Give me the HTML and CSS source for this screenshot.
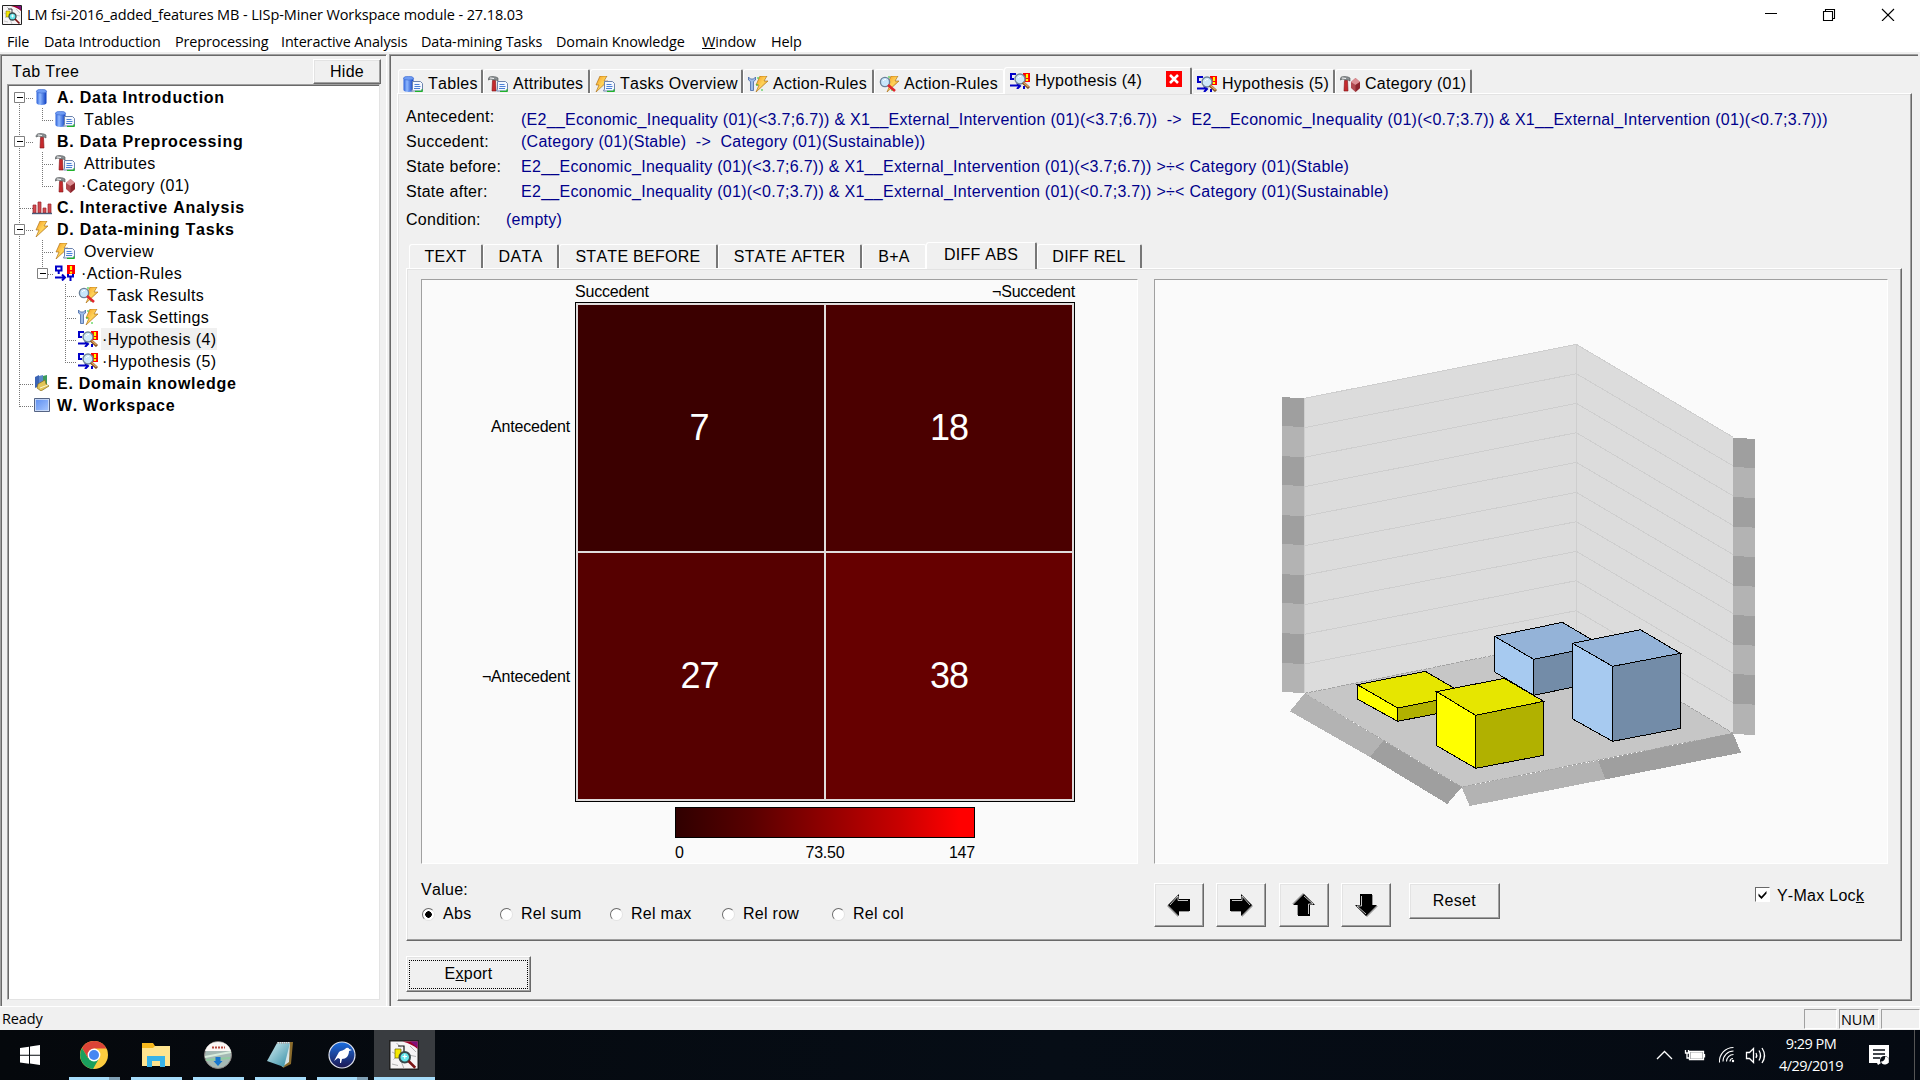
FILE: index.html
```html
<!DOCTYPE html>
<html lang="en">
<head>
<meta charset="utf-8">
<title>LISp-Miner Workspace</title>
<link rel="stylesheet" href="styles.css">
</head>
<body>
<svg class="defs" width="0" height="0">
  <defs>
    <linearGradient id="gBlue" x1="0" x2="1" y1="0" y2="0"><stop offset="0" stop-color="#2a5fd8"/><stop offset=".35" stop-color="#8fb8ff"/><stop offset="1" stop-color="#0a3cc0"/></linearGradient>
    <linearGradient id="gBolt" x1="0" x2="1" y1="0" y2="1"><stop offset="0" stop-color="#f59a1c"/><stop offset=".5" stop-color="#ffd35a"/><stop offset="1" stop-color="#c8740a"/></linearGradient>
    <linearGradient id="gScreen" x1="0" x2="1" y1="0" y2="1"><stop offset="0" stop-color="#5b8df0"/><stop offset="1" stop-color="#a9c8ff"/></linearGradient>
    <linearGradient id="gNote" x1="0" x2="1" y1="0" y2="1"><stop offset="0" stop-color="#d5eef2"/><stop offset="1" stop-color="#2f8ba3"/></linearGradient>
    <linearGradient id="gBird" x1="0" x2="0" y1="0" y2="1"><stop offset="0" stop-color="#1b6fe0"/><stop offset="1" stop-color="#1c1650"/></linearGradient>
    <g id="cyl"><path d="M.5 2v12c0 2.500 10 2.500 10 0V2z" fill="url(#gBlue)"/><ellipse cx="5.500" cy="2.200" rx="5" ry="1.900" fill="#6f9cf4" stroke="#3a68cf" stroke-width=".6"/></g>
    <g id="sheet"><path d="M9.500 5.500h8l2 2v7.500h-11l1-2z" fill="#f4f8ff" stroke="#6c83ad"/><path d="M11.500 8.500h5M11.500 10.500h6M11 12.500h6" stroke="#4b7fd6"/><path d="M12 15.300h7v-2" stroke="#20b32a" stroke-width="1.300" fill="none"/></g>
    <g id="hammer"><path d="M0 4C0 0 4 0 8 1l2 1v3L8 4H5L3 3z" fill="#8b9093" stroke="#4c5052" stroke-width=".6"/><path d="M2 2l4 .5" stroke="#f3f3f3"/><path d="M4.500 4.500h3L8 15H4z" fill="#c52a2d" stroke="#811014" stroke-width=".6"/></g>
    <g id="bolt"><path d="M5 0h7L9 5h4L1 16l3-7H1z" fill="url(#gBolt)" stroke="#a4660c" stroke-width=".6"/></g>
    <g id="lens"><circle cx="7" cy="6" r="4.600" fill="#c8e6fb" stroke="#6b8199" stroke-width="1.400"/><path d="M5 5q1-2 3-1.500" stroke="#fff" fill="none"/></g>
    <g id="rules"><path d="M1 1.500h5.500v4H1zM3.700 5v4M0 12.500h10M7 9.500l3 3-3 3M13 9v2.500h5V8M15.500 11v5" fill="none" stroke="#0000c8" stroke-width="2"/><path d="M12 0h8v9h-8z" fill="#f00"/><path d="M16 1v4M16 6.500v2" stroke="#ff0" stroke-width="2.200"/></g>
    <symbol id="i-db" viewBox="0 0 20 16"><use href="#cyl" x="4"/></symbol>
    <symbol id="i-tables" viewBox="0 0 20 16"><use href="#cyl"/><use href="#sheet"/></symbol>
    <symbol id="i-prep" viewBox="0 0 20 16"><use href="#hammer" x="4"/></symbol>
    <symbol id="i-attr" viewBox="0 0 20 16"><use href="#hammer"/><use href="#sheet"/></symbol>
    <symbol id="i-cat" viewBox="0 0 20 16"><use href="#hammer"/><path d="M15.500 2l4.500 4v6l-4.500 4-4.500-4V6z" fill="#b14a50"/><path d="M15.500 2l4.500 4-4.500 3-4.500-3z" fill="#dc9094"/><path d="M15.500 9v7l4.500-4V6z" fill="#8c262d"/></symbol>
    <symbol id="i-bars" viewBox="0 0 20 16"><path d="M1 6h3v8H1zM6 3h3v11H6zM11 9h3v5h-3zM16 5h3v9h-3z" fill="#d24a50" stroke="#9b2228" stroke-width=".7"/><path d="M0 14.500h20" stroke="#4a5a78" stroke-width="1.400"/></symbol>
    <symbol id="i-bolt" viewBox="0 0 20 16"><use href="#bolt" x="3"/></symbol>
    <symbol id="i-over" viewBox="0 0 20 16"><use href="#bolt"/><use href="#sheet"/></symbol>
    <symbol id="i-rules" viewBox="0 0 20 16"><use href="#rules"/></symbol>
    <symbol id="i-result" viewBox="0 0 20 16"><use href="#bolt" x="7"/><path d="M9 1h2M8 9h2M12 14h2" stroke="#28c828"/><use href="#lens" x="-1"/><path d="M9 9l7 6" stroke="#e0262c" stroke-width="2.600"/></symbol>
    <symbol id="i-set" viewBox="0 0 20 16"><path d="M.5 1v3l2 1.500V14.500h3V5.500l2-1.500V1L5.500 3h-3z" fill="#9dbbe8" stroke="#4467a5" stroke-width=".8"/><use href="#bolt" x="7"/><path d="M9 2h2M8 9h2M13 14h2" stroke="#28c828"/></symbol>
    <symbol id="i-hyp" viewBox="0 0 20 16"><path d="M6 1H1v5h3M0 12.500h9M7 10l3 3-3 3M14 13v3" fill="none" stroke="#0000c8" stroke-width="2"/><path d="M13 0h7v9h-7z" fill="#f00"/><path d="M17 1v4M17 6v2" stroke="#ff0" stroke-width="2.200"/><circle cx="10" cy="6" r="5" fill="#cfe9f8" stroke="#71869a" stroke-width="1.400"/><path d="M8 5q1-2 3-1.500" stroke="#fff" fill="none"/><path d="M13 9.500l6 5.500" stroke="#7d4b1f" stroke-width="3"/><path d="M13.500 9.500l5 4.500" stroke="#e3a55f" stroke-width="1.400"/></symbol>
    <symbol id="i-know" viewBox="0 0 20 16"><path d="M3 2l4-2v11l-4 2z" fill="#3c64b4"/><path d="M7 1l4-1v11H7z" fill="#5a86c8"/><path d="M11 1l4-1v9l-4 2z" fill="#3c9a5c"/><path d="M6 9l7-4 1 4 3 2-8 5-4-3z" fill="#e2c558" stroke="#8a6c18" stroke-width=".7"/><path d="M8 13l8-3" stroke="#fff6d0"/></symbol>
    <symbol id="i-work" viewBox="0 0 20 16"><path d="M3 2h14v12H3z" fill="url(#gScreen)" stroke="#dce6f8" stroke-width="1.500"/><path d="M2.500 1.500h15v13h-15z" fill="none" stroke="#556484"/></symbol>
    <symbol id="i-app" viewBox="0 0 20 20"><path d="M.5.5h19v19H.5z" fill="#f6f4f5" stroke="#222"/><path d="M2 8l4 2-3 3M8 14l2 5M2 16l4 1M14 4l4 4M13 10l5 1M5 2l3 3" stroke="#aaa" fill="none" stroke-width=".6"/><path d="M9 1h10v5q-3-3-10-5z" fill="#a00028"/><path d="M14 1h5v4z" fill="#80107c"/><path d="M4 6h4v6H4z" fill="#f5e800" stroke="#776d00" stroke-width=".5"/><path d="M6 4h4v5" fill="none" stroke="#111" stroke-width=".8"/><circle cx="10.500" cy="11.500" r="3.500" fill="#64e5ea" stroke="#37494b" stroke-width="1.300"/><path d="M13 14l4.500 4.500" stroke="#7a1414" stroke-width="1.700"/><path d="M9 11h3M10.500 9.500v3" stroke="#fff" stroke-width=".8"/></symbol>
    <symbol id="arrow" viewBox="0 0 24 24"><path d="M1 12L12 1v5h11v12H12v5z" fill="#999" transform="translate(-1 1)"/><path d="M1 12L12 1v5h11v12H12v5z"/><path d="M3 12l8-9v4.500h10" fill="none" stroke="#ddd" stroke-width=".9"/></symbol>
  </defs>
</svg>

<header class="titlebar">
  <svg class="app"><use href="#i-app"/></svg>
  <span class="title">LM fsi-2016_added_features MB - LISp-Miner Workspace module - 27.18.03</span>
  <svg class="winctl" viewBox="0 0 130 14"><path d="M0 6.500h12M58.500 4.500h9v9h-9zM60.500 4.500v-2h9v9h-2M117 2l12 12M129 2l-12 12" fill="none" stroke="#000" stroke-width="1.100"/></svg>
</header>
<nav class="menubar">
  <span style="width:23px">File</span><span style="width:117px">Data Introduction</span><span style="width:92px">Preprocessing</span><span style="width:126px">Interactive Analysis</span><span style="width:121px">Data-mining Tasks</span><span style="width:132px">Domain Knowledge</span><span style="width:55px"><u>W</u>indow</span><span>Help</span>
</nav>

<main class="workspace">
  <aside class="side">
    <div class="sidehead"><span>Tab Tree</span><button class="btn hide">Hide</button></div>
    <div class="tree">
      <svg class="lines" width="110" height="330"><g fill="none" stroke="#777" stroke-dasharray="1 1"><path d="M10.500 12v310M17 12.500h7M17 56.500h7M11 122.500h13M17 144.500h7M11 298.500h13M11 320.500h13"/><path d="M33.500 22v12M33 34.500h12M33.500 66v35M33 78.500h12M33 100.500h12M33.500 154v34M33 166.500h12M39 188.500h6M56.500 198v79M56 210.500h12M56 232.500h12M56 254.500h12M56 276.500h12"/></g><g fill="#fff" stroke="#808080"><path d="M5.500 6.500h10v10h-10zM5.500 50.500h10v10h-10zM5.500 138.500h10v10h-10zM28.500 182.500h10v10h-10z"/></g><path d="M8 11.500h6M8 55.500h6M8 143.500h6M31 187.500h6" stroke="#000"/></svg>
      <div class="node l0"><svg><use href="#i-db"/></svg><span>A. Data Introduction</span></div>
      <div class="node l1"><svg><use href="#i-tables"/></svg><span>Tables</span></div>
      <div class="node l0"><svg><use href="#i-prep"/></svg><span>B. Data Preprocessing</span></div>
      <div class="node l1"><svg><use href="#i-attr"/></svg><span>Attributes</span></div>
      <div class="node l1 dot"><svg><use href="#i-cat"/></svg><span>·Category (01)</span></div>
      <div class="node l0"><svg><use href="#i-bars"/></svg><span>C. Interactive Analysis</span></div>
      <div class="node l0"><svg><use href="#i-bolt"/></svg><span>D. Data-mining Tasks</span></div>
      <div class="node l1"><svg><use href="#i-over"/></svg><span>Overview</span></div>
      <div class="node l1 dot"><svg><use href="#i-rules"/></svg><span>·Action-Rules</span></div>
      <div class="node l2"><svg><use href="#i-result"/></svg><span>Task Results</span></div>
      <div class="node l2"><svg><use href="#i-set"/></svg><span>Task Settings</span></div>
      <div class="node l2 dot"><svg><use href="#i-hyp"/></svg><span class="sel">·Hypothesis (4)</span></div>
      <div class="node l2 dot"><svg><use href="#i-hyp"/></svg><span>·Hypothesis (5)</span></div>
      <div class="node l0"><svg><use href="#i-know"/></svg><span>E. Domain knowledge</span></div>
      <div class="node l0"><svg><use href="#i-work"/></svg><span>W. Workspace</span></div>
    </div>
  </aside>

  <section class="content">
    <div class="tabs main">
      <div class="tab" style="width:85px"><svg><use href="#i-tables"/></svg>Tables</div>
      <div class="tab" style="width:107px"><svg><use href="#i-attr"/></svg>Attributes</div>
      <div class="tab" style="width:153px"><svg><use href="#i-over"/></svg>Tasks Overview</div>
      <div class="tab" style="width:131px"><svg><use href="#i-set"/></svg>Action-Rules</div>
      <div class="tab last" style="width:130px"><svg><use href="#i-result"/></svg>Action-Rules</div>
      <div class="tab active" style="width:188px"><svg><use href="#i-hyp"/></svg>Hypothesis (4)<svg class="close" viewBox="0 0 16 16"><path d="M0 0h16v16H0z" fill="#f00"/><path d="M4 4l8 8M12 4l-8 8" stroke="#fff" stroke-width="2.500"/></svg></div>
      <div class="tab" style="width:143px"><svg><use href="#i-hyp"/></svg>Hypothesis (5)</div>
      <div class="tab" style="width:137px"><svg><use href="#i-cat"/></svg>Category (01)</div>
    </div>
    <div class="page">
      <dl class="facts">
        <div class="fact"><dt>Antecedent:</dt><dd class="low">(E2__Economic_Inequality (01)(&lt;3.7;6.7)) &amp; X1__External_Intervention (01)(&lt;3.7;6.7))&nbsp; -&gt;&nbsp; E2__Economic_Inequality (01)(&lt;0.7;3.7)) &amp; X1__External_Intervention (01)(&lt;0.7;3.7)))</dd></div>
        <div class="fact"><dt>Succedent:</dt><dd>(Category (01)(Stable)&nbsp; -&gt;&nbsp; Category (01)(Sustainable))</dd></div>
        <div class="fact"><dt>State before:</dt><dd>E2__Economic_Inequality (01)(&lt;3.7;6.7)) &amp; X1__External_Intervention (01)(&lt;3.7;6.7)) &gt;÷&lt; Category (01)(Stable)</dd></div>
        <div class="fact"><dt>State after:</dt><dd>E2__Economic_Inequality (01)(&lt;0.7;3.7)) &amp; X1__External_Intervention (01)(&lt;0.7;3.7)) &gt;÷&lt; Category (01)(Sustainable)</dd></div>
        <div class="fact cond"><dt>Condition:</dt><dd>(empty)</dd></div>
      </dl>
      <div class="tabs sub">
        <div class="tab" style="width:74px">TEXT</div><div class="tab" style="width:76px">DATA</div><div class="tab" style="width:159px">STATE BEFORE</div><div class="tab" style="width:144px">STATE AFTER</div><div class="tab last" style="width:64px">B+A</div><div class="tab active" style="width:111px">DIFF ABS</div><div class="tab" style="width:105px">DIFF REL</div>
      </div>
      <div class="inner">
        <div class="views">
          <div class="panel matrix">
            <div class="cols"><span>Succedent</span><span>¬Succedent</span></div>
            <div class="rows"><span>Antecedent</span><span>¬Antecedent</span></div>
            <div class="grid"><div class="c7">7</div><div class="c18">18</div><div class="c27">27</div><div class="c38">38</div></div>
            <div class="legend"><div class="ramp"></div><div class="scale"><span>0</span><span>73.50</span><span>147</span></div></div>
          </div>
          <div class="panel chart">
            <svg viewBox="-315 -120 2196 1746" shape-rendering="crispEdges">
              <path d="M134 235L949 73V956L134 1120z" fill="#dcdcdc"/><path d="M949 73l471 279v888L949 956z" fill="#dcdcdc"/>
              <path d="M134 1120L949 956l471 284-815 161z" fill="#c6c6c6"/>
              <g fill="none" stroke="#cecece" stroke-width="3"><path d="M134 235L949 73l471 279M134 323L949 161l471 277M134 412L949 250l471 278M134 500L949 338l471 279M134 589L949 427l471 277M134 677L949 517l471 278M134 766L949 605l471 276M134 854L949 694l471 278M134 943L949 782l471 278M134 1032L949 872l471 277M949 73v883M134 235v885"/></g>
              <path d="M134 1120L949 956l471 284-815 161z" fill="none" stroke="#9b9b9b" stroke-width="2.500" stroke-dasharray="10 4"/>
              <g fill="#b3b3b3"><path d="M66 231l67 4v884l-67-3zM1419 353l66 4v888l-66-3z"/><path d="M134 1120l236 142-40 49-240-137zM605 1402l409-80 23 56-408 80z"/></g>
              <g fill="#9f9f9f"><path d="M66 231l67 4v86l-67-3zM66 408l67 4v86l-67-3zM66 585l67 4v86l-67-3zM66 762l67 4v86l-67-3zM66 939l67 4v89l-67-3z"/><path d="M1419 353l66 4v87l-66-3zM1419 531l66 3v89l-66-3zM1419 708l66 3v89l-66-3zM1419 885l66 3v89l-66-3zM1419 1062l66 3v89l-66-3z"/><path d="M370 1262l235 140-43 50-232-141zM1014 1322l405-82 24 58-406 80z"/></g>
              <g stroke="#000" stroke-width="3">
                <path d="M704 949l203-42 117 69-203 42z" fill="#94b3d8"/><path d="M704 949l117 69v108l-117-70z" fill="#a7caf0"/><path d="M821 1018l203-42v108l-203 42z" fill="#738ca8"/>
                <path d="M938 970l203-41 120 71-203 39z" fill="#94b3d8"/><path d="M938 970l120 69v225l-120-67z" fill="#a7caf0"/><path d="M1058 1039l203-39v225l-203 39z" fill="#738ca8"/>
                <path d="M292 1094l204-40 120 70-203 40z" fill="#e6e600"/><path d="M292 1094l121 70v40l-121-67z" fill="#ff0"/><path d="M413 1164l203-40v40l-203 40z" fill="#b1b100"/>
                <path d="M530 1115l203-40 118 69-204 42z" fill="#e6e600"/><path d="M530 1115l117 71v159l-117-68z" fill="#ff0"/><path d="M647 1186l204-42v162l-204 39z" fill="#b1b100"/>
              </g>
            </svg>
          </div>
        </div>
        <div class="controls">
          <div class="values">
            <div class="vlabel">Value:</div>
            <div class="radios"><label style="width:78px"><i class="radio on"></i>Abs</label><label style="width:110px"><i class="radio"></i>Rel sum</label><label style="width:112px"><i class="radio"></i>Rel max</label><label style="width:110px"><i class="radio"></i>Rel row</label><label><i class="radio"></i>Rel col</label></div>
          </div>
          <div class="moves">
            <button class="btn"><svg><use href="#arrow"/></svg></button><button class="btn"><svg class="right"><use href="#arrow"/></svg></button><button class="btn"><svg class="up"><use href="#arrow"/></svg></button><button class="btn"><svg class="down"><use href="#arrow"/></svg></button>
          </div>
          <button class="btn reset">Reset</button>
          <label class="lock"><i class="check"><svg viewBox="0 0 13 13"><path d="M2.500 5.500l3 3 5-5.500v2.500l-5 5.500-3-3z"/></svg></i><span>Y-Max Loc<u>k</u></span></label>
        </div>
      </div>
      <button class="btn export"><span>E<u>x</u>port</span></button>
    </div>
  </section>
</main>

<footer class="status"><span>Ready</span><div class="cells"><span style="width:33px"></span><span style="width:40px">NUM</span><span style="width:39px"></span></div></footer>

<div class="taskbar">
  <div class="slot start"><svg viewBox="0 0 20 20"><path d="M0 3l9-1.300v8H0zM10 1.500L20 0v9.700H10zM0 10.700h9v8L0 17.500zM10 10.700h10V20l-10-1.400z" fill="#fff"/></svg></div>
  <div class="slot run more"><svg viewBox="0 0 28 28"><circle cx="14" cy="14" r="14" fill="#fccc3f"/><path d="M2 7A14 14 0 0 1 26.500 7.500H14L8 17z" fill="#dc4437"/><path d="M2 7A14 14 0 0 0 13 28l6-10.500L8 17z" fill="#1a9f5d"/><circle cx="14" cy="14" r="6.400" fill="#fff"/><circle cx="14" cy="14" r="5" fill="#4587f2"/></svg></div>
  <div class="slot run"><svg viewBox="0 0 28 28"><path d="M0 2h10l2 3h16v20H0z" fill="#ffe48f"/><path d="M0 2h11l2 3-2 2H0z" fill="#f8b91d"/><path d="M5 15h18v11h-5v-6h-8v6H5z" fill="#38b3e8"/></svg></div>
  <div class="slot run"><svg viewBox="0 0 28 28"><circle cx="14" cy="14" r="13.500" fill="#a5b9b4" stroke="#8b8280"/><path d="M1 10Q4 1 14 1t13 9z" fill="#fbf7f5"/><path d="M8 6.500h13" stroke="#b64a40" stroke-width="2" stroke-dasharray="2 1"/><path d="M1 16l26-5" stroke="#d8ecdc" stroke-width="2"/><path d="M2 19l24-2" stroke="#8fcba0" stroke-width="2"/><path d="M11.500 16h5v4h2L14 25l-4.500-5h2z" fill="#1877cf"/></svg></div>
  <div class="slot run"><svg viewBox="0 0 28 28"><path d="M12 1h15l-2 22-8 4z" fill="#8a6b2c"/><path d="M11 1h13l-1 20-7 5z" fill="#d6e4e6"/><path d="M11 2h13l-6 24L1 20z" fill="url(#gNote)"/><path d="M11 2h14" stroke="#aaa" stroke-width="2" stroke-dasharray="1 1"/></svg></div>
  <div class="slot run more"><svg viewBox="0 0 28 28"><circle cx="14" cy="14" r="13" fill="url(#gBird)" stroke="#dfe3ef" stroke-width="1.200"/><path d="M6 20l5-9c2-2 5-1 7-4q3-1 3 1l3 1-3 1c0 5-3 8-7 8l-1 4h-1v-4l-2-1z" fill="#fff"/></svg></div>
  <div class="slot run current"><svg><use href="#i-app"/></svg></div>
  <div class="tray">
    <svg class="trayicons" viewBox="0 0 112 24"><g fill="none" stroke="#fff" stroke-width="1.300"><path d="M1 16l7.500-7.500L16 16"/><path d="M33.500 8.500h14v8h-14z"/><path d="M35 10h11v5H35z" fill="#fff"/><path d="M48.500 11v3.500M29.500 7v3h3V7M31 10v5h2"/><g stroke-width="1.100"><path d="M77 18.500a3 3 0 0 1 3-3M73.500 18.500a7 7 0 0 1 7-7M70 18.500a10.500 10.500 0 0 1 10.500-10.500M66.500 19.500a14 14 0 0 1 14-15" transform="translate(-3 0)"/></g><path d="M90.500 9.500h3l4-4v14l-4-4h-3zM100 10q1.500 2.500 0 5M103 7.500q3 5 0 10M106 5q5 7.500 0 15"/></g><circle cx="77" cy="18" r="1.200" fill="#fff"/></svg>
    <div class="clock"><span>9:29 PM</span><span>4/29/2019</span></div>
    <svg class="note" viewBox="0 0 20 20"><path d="M0 0h20v18h-8l-3 2-1-2H0z" fill="#fff"/><path d="M4 5h12M4 9h12M4 13h7" stroke="#050a12" stroke-width="1.300"/><circle cx="15.500" cy="15.500" r="4.500" fill="#050a12"/><path d="M16 11.500a4 4 0 1 1-4 5 4 4 0 0 0 4-5z" fill="#fff"/></svg>
    <i class="peek"></i>
  </div>
</div>
</body>
</html>
```
FILE: styles.css
```css
* { box-sizing: border-box; }
body { margin: 0; width: 1920px; height: 1080px; overflow: hidden; display: flex; flex-direction: column; background: #f0f0f0; color: #000; font: 16px/20px "Liberation Sans", Arial, sans-serif; letter-spacing: .28px; font-kerning: none; white-space: nowrap; }
svg { display: block; flex: none; }
.defs { position: absolute; }
.titlebar, .menubar, .status, .clock { font-family: "Open Sans", "Noto Sans", sans-serif; font-size: 14.5px; letter-spacing: -.11px; }
.titlebar { height: 28px; background: #fff; display: flex; align-items: center; padding: 1px 25px 0 2px; }
.app { width: 20px; height: 20px; }
.title { margin-left: 5px; }
.winctl { width: 130px; height: 14px; margin: -2px 0 0 auto; }
.menubar { height: 24px; background: #fff; display: flex; align-items: center; gap: 14px; padding: 3px 0 0 7px; font-size: 14.4px; }

.workspace { height: 955px; padding-top: 2px; display: grid; grid-template-columns: 387px 1529px; column-gap: 2px; border-bottom: 1px solid #fff; }
.side, .content { border-top: 1px solid #a0a0a0; border-left: 1px solid #a0a0a0; box-shadow: inset 1px 1px #696969; }
.side { padding: 4px 0 0 7px; border-right: 1px solid #fff; }
.sidehead { height: 25px; width: 373px; display: flex; justify-content: space-between; align-items: center; padding-left: 4px; }
.btn { font: inherit; letter-spacing: inherit; color: #000; background: #f0f0f0; border: 1px solid; border-color: #fff #696969 #696969 #fff; box-shadow: inset -1px -1px #a0a0a0, inset 1px 1px #e3e3e3; padding: 0; border-radius: 0; }
.hide { width: 68px; height: 25px; }
.tree { position: relative; width: 373px; height: 916px; background: #fff; border: 1px solid; border-color: #a0a0a0 #e3e3e3 #e3e3e3 #a0a0a0; box-shadow: inset 1px 1px #696969; padding-top: 1px; margin-left: -1px; letter-spacing: .4px; }
.lines { position: absolute; left: 1px; top: 1px; }
.node { position: relative; height: 22px; display: flex; align-items: center; }
.node svg { width: 20px; height: 16px; }
.node span { height: 22px; line-height: 20px; padding-top: 2px; margin-left: 9px; }
.l0 { padding-left: 24px; font-weight: 700; letter-spacing: .75px; }
.l0 span { margin-left: 5px; }
.l1 { padding-left: 47px; }
.l2 { padding-left: 70px; }
.dot span { margin-left: 5px; padding-left: 1px; padding-right: 1px; }
.node.l2.dot span { margin-left: 3px; }
.sel { background: #f0f0f0; }

.content { padding: 12px 6px 0 7px; }
.tabs { display: flex; align-items: flex-end; position: relative; z-index: 1; }
.tab { width: 80px; height: 24px; border-top: 1px solid #fff; border-left: 1px solid #fff; border-right: 2px solid #777; display: flex; align-items: center; border-radius: 3px 2px 0 0; box-shadow: 2px 0 #f0f0f0; }
.tab.last { border-right: 1px solid #fff; box-shadow: none; }
.tab.active { height: 27px; margin-bottom: -1px; background: #f0f0f0; padding-bottom: 3px; }
.main { height: 26px; padding-left: 1px; }
.main .tab { padding-left: 4px; overflow: hidden; padding-top: 4px; }
.main .tab.active { padding: 0 0 0 5px; }
.tab svg { width: 20px; height: 16px; margin-right: 5px; }
.tab .close { width: 16px; margin: -4px 8px 0 auto; }
.page { height: 908px; border: 1px solid; border-color: #fff #696969 #696969 #fff; box-shadow: inset -1px -1px #a0a0a0, inset 1px 1px #e3e3e3; padding: 13px 8px 0 8px; }
.facts { margin: 0; height: 135px; }
.fact { display: grid; grid-template-columns: 115px 1fr; height: 25px; }
dt, dd { margin: 0; }
dd { color: #00008b; }
.low { padding-top: 3px; }
.cond { grid-template-columns: 100px 1fr; padding-top: 3px; }
.sub { height: 26px; padding-left: 3px; }
.sub .tab { justify-content: center; }
.inner { width: 1496px; height: 673px; border: 1px solid; border-color: #fff #696969 #696969 #fff; box-shadow: inset -1px -1px #a0a0a0, inset 1px 1px #e3e3e3; padding: 10px 13px 0 14px; }
.views { display: grid; grid-template-columns: 717px 734px; column-gap: 16px; }
.panel { height: 585px; background: #fafafa; border: 1px solid; border-color: #a0a0a0 #fff #fff #a0a0a0; }
.matrix { display: grid; grid-template: 22px 500px 61px / 153px 500px; letter-spacing: -.2px; }
.cols { grid-column: 2; display: flex; justify-content: space-between; padding-top: 2px; }
.rows { grid-column: 1; display: grid; grid-template-rows: 1fr 1fr; align-items: center; text-align: right; padding-right: 5px; }
.grid { border: 1px solid #000; background: #e0dcdc; padding: 2px; display: grid; grid-template: 1fr 1fr / 1fr 1fr; gap: 2px; color: #fff; font-size: 36px; letter-spacing: -1px; }
.grid div { display: flex; align-items: center; justify-content: center; }
.c7 { background: #3b0000; padding-right: 4px; }
.c18 { background: #4b0000; }
.c27 { background: #560000; padding-right: 3px; }
.c38 { background: #660000; }
.legend { grid-column: 2; width: 300px; margin: 5px 0 0 100px; }
.ramp { height: 31px; border: 1px solid #000; background: linear-gradient(90deg, #300000, #580000 25%, #900000 50%, #c80000 75%, #f00 95%); }
.scale { display: grid; grid-template-columns: 1fr 1fr 1fr; padding-top: 5px; text-align: center; }
.scale span:first-child { text-align: left; }
.scale span:last-child { text-align: right; }
.chart svg { width: 732px; height: 582px; }
.controls { display: flex; padding-top: 19px; }
.values { width: 733px; margin-top: -4px; }
.vlabel { height: 25px; line-height: 22px; }
.radios { display: flex; }
.radios label { display: flex; align-items: center; }
.radio { width: 13px; height: 13px; border-radius: 50%; background: #fff; border: 1px solid; border-color: #696969 #e3e3e3 #e3e3e3 #696969; margin-right: 8px; margin-left: 1px; }
.on { background: radial-gradient(#000 0 3px, #fff 3.500px); }
.moves { display: flex; gap: 12.300px; }
.moves .btn { width: 50px; height: 44px; display: flex; align-items: center; justify-content: center; }
.moves svg { width: 24px; height: 24px; }
.right { transform: scaleX(-1); }
.up { transform: rotate(90deg); }
.down { transform: rotate(-90deg); }
.reset { width: 91px; height: 36px; margin-left: 18px; }
.lock { display: flex; height: 15px; align-items: center; margin: 4px 0 0 255px; }
.lock span { padding-top: 2px; }
.check { width: 15px; height: 15px; background: #fff; border: 1px solid; border-color: #696969 #fff #fff #696969; margin-right: 7px; }
.export { width: 125px; height: 36px; margin-top: 15px; padding: 2px; }
.export span { display: flex; height: 29px; border: 1px dotted #000; align-items: center; justify-content: center; }

.status { height: 23px; display: flex; justify-content: space-between; align-items: center; padding: 1px 0 0 2px; }
.cells { display: flex; gap: 2px; }
.cells span { height: 20px; border: 1px solid; border-color: #a0a0a0 #fff #fff #a0a0a0; padding-left: 1px; }
.taskbar { height: 50px; background: linear-gradient(90deg, #05080c, #060d16 55%, #050a12); display: flex; }
.slot { width: 51px; margin-right: 11px; display: flex; align-items: center; justify-content: center; }
.slot svg { width: 28px; height: 28px; margin-right: 2px; }
.start { margin-left: 5px; margin-right: 13px; }
.start svg { width: 20px; height: 20px; }
.run { border-bottom: 3px solid #a5dcfa; padding-top: 2px; }
.more { border-image: linear-gradient(90deg, #a5dcfa 79%, #7f9fb4 79%) 0 0 3; }
.current { width: 61px; background: #393c40; margin-left: -5px; }
.current svg { width: 30px; height: 30px; }
.tray { margin-left: auto; display: flex; align-items: center; color: #fff; }
.trayicons { width: 112px; height: 24px; }
.clock { width: 80px; margin-left: 3px; display: flex; flex-direction: column; line-height: 22px; text-align: center; letter-spacing: -.5px; }
.note { width: 20px; height: 20px; margin: 0 25px 0 18px; }
.peek { width: 1px; height: 50px; background: #555; margin-right: 5px; }
```
